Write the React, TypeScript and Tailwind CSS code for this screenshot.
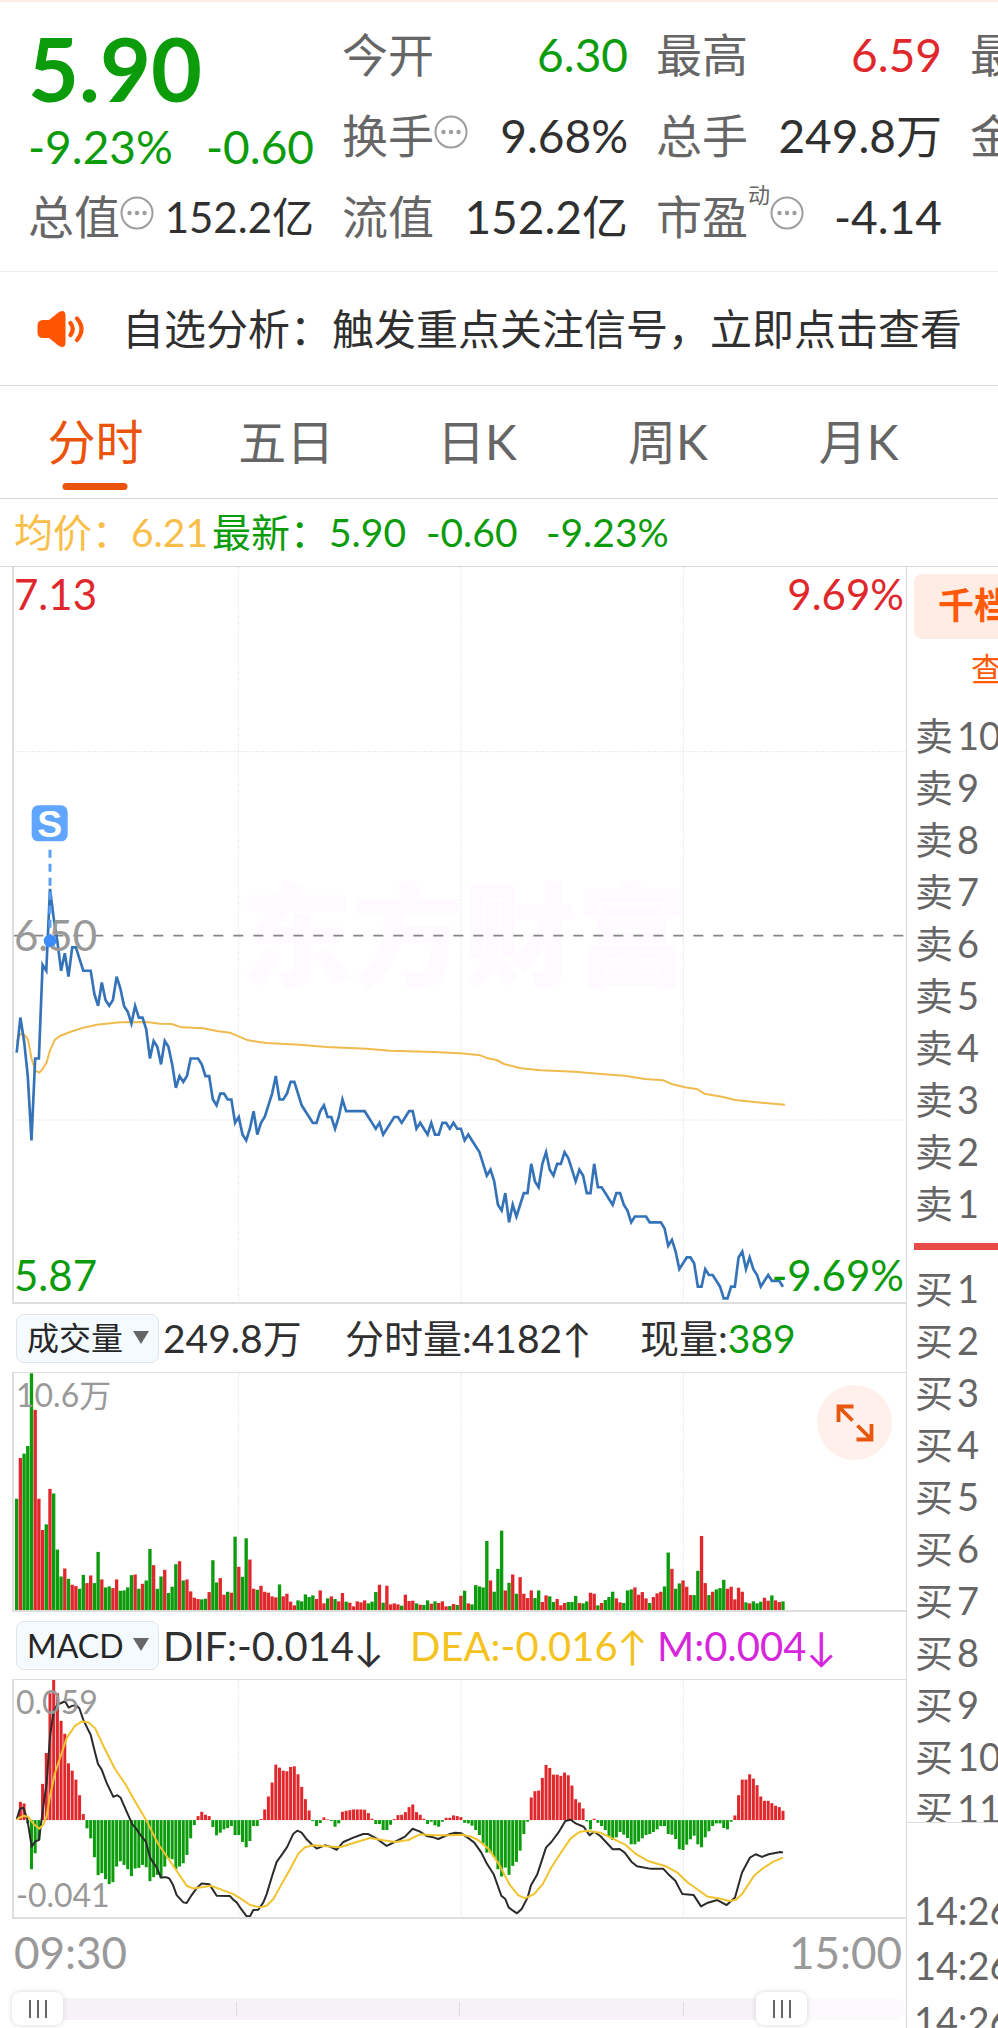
import { useState } from "react";

const GREEN = "#0b9b0b";
const RED = "#e0272b";

// closing price of every minute, in cents
const prices = [
  630, 636, 632, 626, 615, 629, 629, 645, 644, 658, 653, 649, 644, 647, 643, 648, 648, 646, 644, 644,
  644, 640, 638, 642, 639, 638, 639, 643, 641, 638, 637, 635, 638, 636, 636, 634, 629, 632, 631, 628,
  632, 631, 628, 624, 626, 625, 626, 629, 629, 629, 628, 626, 626, 622, 621, 623, 623, 622, 622, 618,
  619, 616, 615, 617, 620, 616, 618, 619, 621, 623, 626, 622, 622, 623, 625, 625, 623, 621, 620, 619,
  618, 618, 620, 621, 619, 619, 617, 619, 622, 620, 620, 620, 620, 620, 620, 619, 618, 617, 618, 616,
  617, 618, 619, 619, 618, 619, 620, 620, 617, 618, 617, 616, 618, 616, 616, 618, 618, 617, 618, 617,
  617, 615, 616, 615, 614, 613, 611, 609, 610, 608, 604, 603, 606, 601, 604, 602, 604, 606, 606, 611,
  608, 607, 611, 613, 610, 609, 611, 611, 613, 612, 610, 608, 610, 609, 606, 606, 611, 607, 607, 606,
  605, 604, 606, 606, 604, 603, 601, 602, 602, 602, 602, 601, 601, 601, 601, 600, 597, 598, 596, 593,
  594, 595, 595, 594, 590, 590, 593, 592, 592, 591, 590, 588, 588, 590, 590, 595, 596, 593, 595, 593,
  592, 590, 591, 592, 591, 591, 591, 590,
];

// volume per minute, below zero for a falling minute
const volumes = [
  -335, 458, -471, -494, -713, 603, 335, 241, -258, 365, -351, -182, -101, 125, -94, 76, 72, -64, -106, 81,
  104, -81, -175, 92, -68, -71, 66, 92, -58, -59, -68, -105, 107, -64, 79, -89, -184, 135, -64, -101,
  121, -51, -70, -138, 147, -89, 92, 56, 37, 33, -32, -34, 54, -150, -83, 96, 46, -55, 52, -221,
  130, -100, -216, 152, 64, -61, 73, 55, 52, 41, 38, -77, 41, 49, 25, 14, -29, -26, -47, -39,
  -44, 33, 59, 20, -35, 41, -33, 26, 51, -25, 22, 11, 26, 23, 29, -20, -25, -54, 76, -22,
  73, 17, 20, 17, -13, 46, 27, 28, -20, 16, -15, -29, 19, -26, 21, 26, 11, -12, 18, -15,
  43, -58, 20, -17, -75, -71, -68, -208, 89, -55, -124, -239, 59, -82, 107, -49, 99, 49, 36, 59,
  -36, -59, 24, 44, -41, -24, 33, 14, 21, -24, -24, -42, 21, -20, -26, 52, 49, -14, 21, -30,
  -39, -55, 35, 23, -21, -59, -62, 68, 46, 54, 35, -21, 39, 50, 55, -71, -173, 124, -64, -80,
  89, 70, 45, -45, -118, 223, 81, -45, 55, -62, -66, -91, 64, 70, 32, 67, 55, -23, 20, -26,
  -20, -25, 37, 28, -44, 29, 24, -26,
];

const macd = [
  0, 55, 50, -10, -148, -100, -60, 109, 202, 382, 422, 382, 299, 260, 171, 149, 122, 75, 18, -25,
  -55, -112, -166, -160, -178, -193, -187, -140, -124, -135, -148, -169, -146, -144, -135, -142, -184, -172, -165, -175,
  -140, -115, -118, -147, -140, -130, -105, -55, -15, 12, 25, 16, 12, -21, -46, -38, -28, -24, -18, -45,
  -45, -66, -82, -63, -18, -18, 3, 32, 71, 113, 167, 158, 149, 147, 160, 162, 138, 100, 63, 29,
  -3, -18, -9, 8, 2, -3, -20, -10, 25, 28, 30, 32, 32, 32, 31, 21, 4, -12, -12, -30,
  -30, -14, 3, 15, 16, 24, 39, 47, 24, 16, 4, -12, -5, -16, -20, -5, 7, 7, 14, 12,
  9, -8, -10, -17, -30, -45, -70, -98, -98, -112, -148, -170, -143, -165, -138, -126, -92, -42, -5, 68,
  87, 89, 127, 166, 157, 137, 137, 133, 143, 135, 104, 63, 53, 35, -4, -28, 4, -8, -18, -30,
  -50, -60, -52, -36, -44, -54, -73, -73, -65, -55, -45, -42, -36, -28, -18, -18, -42, -44, -57, -88,
  -90, -74, -58, -47, -73, -82, -52, -34, -18, -10, -10, -24, -28, -5, 14, 75, 122, 122, 138, 125,
  105, 71, 58, 58, 51, 43, 39, 28,
];

const averageLine =
  "50,1425 62,1400 75,1405 84,1418 95,1476 106,1511 118,1517 130,1503 140,1486 150,1450 165,1418 180,1407 210,1395 250,1382 290,1373 360,1366 440,1365 480,1370 515,1371 545,1381 610,1384 650,1392 690,1397 710,1406 745,1420 800,1428 900,1433 980,1440 1100,1445 1170,1451 1301,1455 1381,1459 1441,1465 1464,1474 1490,1479 1512,1491 1562,1504 1623,1510 1723,1514 1804,1521 1874,1526 1934,1536 1990,1540 2015,1551 2055,1561 2093,1567 2113,1580 2166,1589 2206,1599 2286,1607 2355,1613";

const difLine =
  "50,540 60,508 70,505 82,540 95,622 106,606 117,602 130,500 140,430 150,290 160,220 172,193 182,190 195,184 206,203 216,198 228,196 238,205 250,240 262,265 272,285 283,330 294,373 305,390 320,430 340,472 352,467 362,475 375,505 397,555 408,567 420,585 438,608 450,655 470,685 483,715 498,714 508,718 518,735 530,768 550,790 560,792 575,768 590,747 605,733 628,735 650,770 690,771 700,782 710,790 725,812 740,832 750,832 760,813 775,812 790,790 800,765 815,715 830,668 850,640 862,622 880,583 892,574 905,580 920,600 935,615 950,628 975,618 990,622 1010,632 1030,608 1060,595 1090,584 1105,584 1130,598 1160,620 1190,605 1215,592 1238,568 1260,577 1280,590 1300,594 1315,599 1335,590 1350,584 1366,580 1384,582 1402,594 1423,610 1444,640 1460,672 1481,705 1504,770 1516,780 1526,805 1539,815 1551,823 1565,810 1583,775 1593,738 1612,705 1625,665 1638,625 1654,608 1675,580 1696,545 1712,541 1727,552 1751,562 1769,588 1782,577 1801,590 1838,630 1859,629 1874,640 1895,668 1911,681 1953,689 1990,689 2005,705 2026,725 2047,765 2081,768 2103,802 2121,792 2152,783 2180,798 2205,775 2226,700 2250,655 2267,645 2286,653 2306,645 2341,638 2349,640";

const deaLine =
  "50,540 70,529 85,532 100,553 118,568 130,555 140,530 150,470 165,400 185,340 200,295 225,258 245,245 265,247 285,265 310,318 345,388 375,432 405,485 440,545 475,615 520,680 560,740 580,748 600,745 632,740 660,750 700,765 720,777 750,798 780,805 800,800 820,780 845,735 870,690 895,643 915,624 940,618 1020,624 1070,608 1110,596 1150,603 1185,608 1225,602 1260,585 1300,588 1350,588 1387,586 1413,592 1434,602 1465,628 1497,675 1528,735 1554,768 1575,778 1602,765 1628,735 1654,685 1686,635 1712,597 1738,578 1759,574 1801,580 1843,600 1874,615 1906,643 1948,667 2000,682 2032,700 2063,730 2089,748 2121,772 2157,778 2189,786 2208,782 2226,765 2262,710 2288,688 2320,667 2349,655";

const minuteX = (i: number) => 50 + 11.106 * i;
const priceLine = prices.map((p, i) => `${minuteX(i)},${1106 + (650 - p) * 17.55}`).join(" ");

function MoreIcon() {
  return (
    <svg viewBox="0 0 34 34" className="mb-2 size-[34px] shrink-0" fill="#9d9d9d">
      <circle cx="17" cy="17" r="15.5" fill="none" stroke="#9d9d9d" strokeWidth="2" />
      <circle cx="9.5" cy="17" r="2.2" />
      <circle cx="17" cy="17" r="2.2" />
      <circle cx="24.5" cy="17" r="2.2" />
    </svg>
  );
}

type StatProps = { label: string; value?: string; color?: string; sup?: string; more?: boolean };

function Stat({ label, value, color = "text-[#303030]", sup, more }: StatProps) {
  return (
    <div className="flex h-[81px] items-center whitespace-nowrap">
      <span className="text-[#666]">{label}</span>
      {sup && <sup className="self-start pt-5 text-[22px] leading-5 text-[#666]">{sup}</sup>}
      {more && <MoreIcon />}
      <span className={`ml-auto ${color}`}>{value}</span>
    </div>
  );
}

function GridLines({ top, height }: { top: number; height: number }) {
  return (
    <g stroke="#dcdcdc" strokeWidth="3" strokeDasharray="3 4">
      {[716, 1383, 2050].map((x) => (
        <line key={x} x1={x} x2={x} y1={top} y2={top + height} />
      ))}
    </g>
  );
}

function PriceChart() {
  return (
    <div className="relative ml-3 border-l-2 border-b-2 border-[#dedede]">
      <div className="absolute inset-x-0 top-[298px] pl-[226px] text-[112px] leading-[140px] font-black whitespace-nowrap text-[#fefaff]">
        东方财富
      </div>
      <svg viewBox="42 0 2676 2205" preserveAspectRatio="none" className="relative block h-[735px] w-full">
        <GridLines top={0} height={2205} />
        <g stroke="#dcdcdc" strokeWidth="3" strokeDasharray="3 4">
          <line x1="40" x2="2718" y1="554" y2="554" />
          <line x1="40" x2="2718" y1="1659" y2="1659" />
        </g>
        <line x1="40" x2="2718" y1="1106" y2="1106" stroke="#858585" strokeWidth="5" strokeDasharray="30 30" />
        <polyline points={averageLine} fill="none" stroke="#f0bb4e" strokeWidth="6" strokeLinejoin="round" />
        <polyline points={priceLine} fill="none" stroke="#3573b9" strokeWidth="8" />
        <line x1="150" x2="150" y1="848" y2="1110" stroke="#5c9ff2" strokeWidth="9" strokeDasharray="24 18" />
        <circle cx="150" cy="1122" r="19" fill="#3d8bf8" />
        <rect x="95" y="715" width="108" height="108" rx="20" fill="#60a5ff" />
        <text x="149" y="809" textAnchor="middle" fontSize="112" fontWeight="700" fill="#fff" fontFamily="Liberation Sans">
          S
        </text>
      </svg>
      <div className="absolute inset-0 text-[42px] leading-[54px]">
        <span className="absolute top-0 left-0 text-[#e0272b]">7.13</span>
        <span className="absolute top-0 right-0.5 text-[#e0272b]">9.69%</span>
        <span className="absolute top-1/2 left-0 -translate-y-1/2 text-[#999]">6.50</span>
        <span className="absolute bottom-0 left-0 text-[#0b9b0b]">5.87</span>
        <span className="absolute right-0.5 bottom-0 text-[#0b9b0b]">-9.69%</span>
      </div>
    </div>
  );
}

function VolumeChart() {
  return (
    <div className="relative ml-3 border-t border-b-2 border-l-2 border-[#dedede]">
      <svg viewBox="42 219 2676 714" preserveAspectRatio="none" className="block h-[237px] w-full">
        <GridLines top={219} height={714} />
        {volumes.map((v, i) => (
          <rect
            key={i}
            x={minuteX(i) - 5}
            y={933 - Math.abs(v)}
            width="10"
            height={Math.abs(v)}
            fill={v > 0 ? RED : GREEN}
          />
        ))}
      </svg>
      <span className="absolute top-0 left-0.5 text-[32px] leading-[44px] text-[#999]">10.6万</span>
      <button
        aria-label="全屏"
        className="absolute top-3 right-3.5 flex size-[75px] items-center justify-center rounded-full bg-[#fff0ec]"
      >
        <svg viewBox="0 0 38 38" className="size-[38px]" fill="none" stroke="#e8560f" strokeWidth="3.8">
          <path d="M17.5 2.5H2.5V18M3 3L16.5 16.5M20.5 35.5H35.5V20M35 35L21.5 21.5" />
        </svg>
      </button>
    </div>
  );
}

function MacdChart() {
  return (
    <div className="relative ml-3 border-t border-b-2 border-l-2 border-[#dedede]">
      <svg viewBox="42 120 2676 714" preserveAspectRatio="none" className="block h-[237px] w-full">
        <GridLines top={120} height={714} />
        {macd.map((v, i) => (
          <rect
            key={i}
            x={minuteX(i) - 4.5}
            y={v > 0 ? 542 - v : 542}
            width="9"
            height={Math.abs(v)}
            fill={v > 0 ? RED : GREEN}
          />
        ))}
        <polyline points={difLine} fill="none" stroke="#2b2b2b" strokeWidth="6" strokeLinejoin="round" />
        <polyline points={deaLine} fill="none" stroke="#f0c32e" strokeWidth="6" strokeLinejoin="round" />
      </svg>
      <span className="absolute top-0 left-0.5 text-[32px] leading-[44px] text-[#999]">0.059</span>
      <span className="absolute bottom-0 left-0.5 text-[32px] leading-[44px] text-[#999]">-0.041</span>
    </div>
  );
}

function IndicatorSelect({ label, options }: { label: string; options: string[] }) {
  return (
    <div className="relative w-[143px] shrink-0">
      <select
        aria-label={label}
        className="block h-[49px] w-full appearance-none rounded-lg border border-[#e2e4ec] bg-[#f5faff] pl-2.5 text-[32px] leading-[46px] text-[#262626]"
      >
        {options.map((o) => (
          <option key={o}>{o}</option>
        ))}
      </select>
      <svg viewBox="0 0 16 13" className="pointer-events-none absolute top-[17px] right-2.5 h-[13px] w-4">
        <path d="M0 0H16L8 13Z" fill="#666" />
      </svg>
    </div>
  );
}

const tabs = ["分时", "五日", "日K", "周K", "月K"];

const thumb =
  "pointer-events-none absolute inset-0 h-[33px] w-full appearance-none bg-transparent [&::-webkit-slider-thumb]:pointer-events-auto [&::-webkit-slider-thumb]:h-[33px] [&::-webkit-slider-thumb]:w-[51px] [&::-webkit-slider-thumb]:appearance-none [&::-webkit-slider-thumb]:rounded-lg [&::-webkit-slider-thumb]:shadow-[0_0_5px_#d6d2d8] [&::-webkit-slider-thumb]:[background:linear-gradient(90deg,#666_0_2px,#fff_2px_8px,#666_8px_10px,#fff_10px_16px,#666_16px_18px)_center/18px_18px_no-repeat,#fff]";

export default function App() {
  const [tab, setTab] = useState("分时");
  const [from, setFrom] = useState(0);
  const [to, setTo] = useState(883);

  return (
    <div className="overflow-hidden bg-white font-['Lato','Noto_Sans_CJK_SC',sans-serif]">
      <header className="flex gap-7 overflow-hidden border-t-2 border-b border-t-[#ffebe5] border-b-[#ececec] px-7 pt-3 pb-3.5 text-[46px] leading-[60px]">
        <div className="w-[286px] shrink-0">
          <div className="h-[104px] text-[88px] leading-[108px] font-bold text-[#0b9b0b]">5.90</div>
          <div className="flex h-[58px] items-center justify-between text-[#0b9b0b]">
            <span>-9.23%</span>
            <span>-0.60</span>
          </div>
          <Stat label="总值" value="152.2亿" color="text-[42px] text-[#303030]" more />
        </div>
        <div className="w-[286px] shrink-0">
          <Stat label="今开" value="6.30" color="text-[#0b9b0b]" />
          <Stat label="换手" value="9.68%" more />
          <Stat label="流值" value="152.2亿" />
        </div>
        <div className="w-[286px] shrink-0">
          <Stat label="最高" value="6.59" color="text-[#e0272b]" />
          <Stat label="总手" value="249.8万" />
          <Stat label="市盈" sup="动" value="-4.14" more />
        </div>
        <div className="w-[286px] shrink-0">
          <Stat label="最" />
          <Stat label="金" />
        </div>
      </header>

      <a href="#signal" className="flex h-[114px] items-center border-b border-[#d8d8d8] pl-9 whitespace-nowrap text-[#303030]">
        <svg viewBox="0 0 48 38" className="h-[38px] w-12 shrink-0" fill="#ff5500">
          <path d="M7 10H13L23 2Q29 -1 29.500 5V33Q29 39 23 36L13 28H7Q1.500 28 1.500 22V16Q1.500 10 7 10Z" />
          <path
            d="M34.500 13Q39 19 34.500 25M41 8.500Q50 19 41 30"
            fill="none"
            stroke="#ff5500"
            strokeWidth="4.200"
            strokeLinecap="round"
          />
        </svg>
        <span className="ml-[38px] text-[42px] leading-[60px]">自选分析：触发重点关注信号，立即点击查看</span>
      </a>

      <nav className="grid h-[113px] grid-cols-5 border-b border-[#d6d6dc] pr-11 text-5xl">
        {tabs.map((t) => (
          <button
            key={t}
            onClick={() => setTab(t)}
            className={`relative ${t === tab ? "text-[#ea530c]" : "text-[#666]"}`}
          >
            {t}
            {t === tab && (
              <span className="absolute bottom-2 left-1/2 h-[7px] w-[65px] -translate-x-1/2 rounded-full bg-[#ea530c]" />
            )}
          </button>
        ))}
      </nav>

      <div className="flex h-[68px] items-center border-b border-[#d6d6dc] pl-3.5 text-[39px] whitespace-nowrap text-[#0b9b0b]">
        <span className="w-[198px] text-[#f9be49]">均价：6.21</span>
        <span className="w-[214px]">最新：5.90</span>
        <span className="w-[120px]">-0.60</span>
        <span>-9.23%</span>
      </div>

      <div className="flex">
        <main className="min-w-0 flex-1">
          <PriceChart />
          <div className="flex h-[68px] items-center pl-4 text-[39px] whitespace-nowrap text-[#303030]">
            <IndicatorSelect label="副图一" options={["成交量", "MACD"]} />
            <span className="ml-1 w-[182px]">249.8万</span>
            <span className="w-[295px]">分时量:4182↑</span>
            <span>
              现量:<span className="text-[#0b9b0b]">389</span>
            </span>
          </div>
          <VolumeChart />
          <div className="flex h-[67px] items-center pl-4 text-[40px] whitespace-nowrap">
            <IndicatorSelect label="副图二" options={["MACD", "成交量"]} />
            <span className="ml-1 w-[247px] text-[#303030]">DIF:-0.014↓</span>
            <span className="w-[247px] text-[#f5c321]">DEA:-0.016↑</span>
            <span className="text-[#d626dc]">M:0.004↓</span>
          </div>
          <MacdChart />
          <div className="flex h-[73px] items-center justify-between pr-1 pb-2 pl-3.5 text-[44px] text-[#999]">
            <span>09:30</span>
            <span>15:00</span>
          </div>
          <div className="relative mb-[3px] ml-3 h-[33px]">
            <div className="absolute inset-x-0 top-1.5 h-[22px] overflow-hidden rounded-full bg-[#fdfafe]">
              <div className="h-full bg-[#f6f2f7]" style={{ width: `${to / 10}%` }} />
            </div>
            <div className="absolute top-2.5 left-1/4 h-3.5 w-px bg-[#dcdcdc]" />
            <div className="absolute top-2.5 left-1/2 h-3.5 w-px bg-[#dcdcdc]" />
            <div className="absolute top-2.5 left-3/4 h-3.5 w-px bg-[#dcdcdc]" />
            <input type="range" aria-label="开始" max={1000} value={from} onChange={(e) => setFrom(+e.target.value)} className={thumb} />
            <input type="range" aria-label="结束" max={1000} value={to} onChange={(e) => setTo(+e.target.value)} className={thumb} />
          </div>
        </main>

        <aside className="w-[92px] shrink-0 overflow-hidden border-l border-[#d8d8dc] text-[38px] leading-[52px] whitespace-nowrap text-[#666] contain-size">
          <button className="mt-[7px] ml-[7px] block h-[65px] w-full rounded-l-lg bg-[#ffece4] pb-1 pl-6 text-left text-4xl font-bold text-[#ff5a0a]">
            千档
          </button>
          <a href="#more" className="block h-[70px] pt-1 pl-16 text-[32px] text-[#ff5a0a]">
            查
          </a>
          <ul className="pl-2">
            {[10, 9, 8, 7, 6, 5, 4, 3, 2, 1].map((n) => (
              <li key={n} className="flex gap-1">
                <span>卖</span>
                <span>{n}</span>
              </li>
            ))}
          </ul>
          <div className="mt-3.5 mb-3 ml-[7px] h-[7px] bg-[#e84a45]" />
          <ul className="h-[561px] overflow-hidden border-b border-[#dedede] pl-2">
            {[1, 2, 3, 4, 5, 6, 7, 8, 9, 10, 11].map((n) => (
              <li key={n} className="flex gap-1">
                <span>买</span>
                <span>{n}</span>
              </li>
            ))}
          </ul>
          <ul className="mt-[60px] pl-[7px] leading-[55px]">
            <li>14:26</li>
            <li>14:26</li>
            <li>14:26</li>
          </ul>
        </aside>
      </div>
    </div>
  );
}
